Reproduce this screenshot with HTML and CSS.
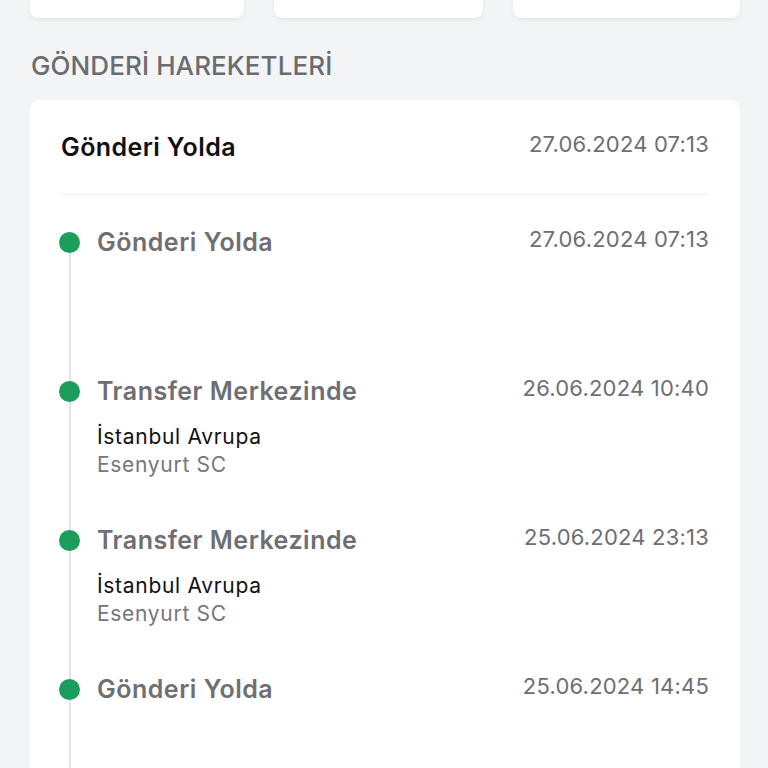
FILE: index.html
```html
<!DOCTYPE html>
<html lang="tr">
<head>
<meta charset="utf-8">
<link rel="stylesheet" href="styles.css">
</head>
<body>
<div class="page">
  <div class="top-cards">
    <div class="mini-card"></div>
    <div class="mini-card"></div>
    <div class="mini-card"></div>
  </div>
  <h2 class="section-title">GÖNDERİ HAREKETLERİ</h2>
  <div class="card">
    <div class="card-head">
      <div class="head-title">Gönderi Yolda</div>
      <div class="head-date">27.06.2024 07:13</div>
    </div>
    <div class="timeline">
      <div class="item">
        <span class="dot"></span>
        <div class="item-body">
          <div class="item-row">
            <div class="item-title">Gönderi Yolda</div>
            <div class="item-date">27.06.2024 07:13</div>
          </div>
        </div>
      </div>
      <div class="item">
        <span class="dot"></span>
        <div class="item-body">
          <div class="item-row">
            <div class="item-title">Transfer Merkezinde</div>
            <div class="item-date">26.06.2024 10:40</div>
          </div>
          <div class="item-sub">
            <div class="loc">İstanbul Avrupa</div>
            <div class="branch">Esenyurt SC</div>
          </div>
        </div>
      </div>
      <div class="item">
        <span class="dot"></span>
        <div class="item-body">
          <div class="item-row">
            <div class="item-title">Transfer Merkezinde</div>
            <div class="item-date">25.06.2024 23:13</div>
          </div>
          <div class="item-sub">
            <div class="loc">İstanbul Avrupa</div>
            <div class="branch">Esenyurt SC</div>
          </div>
        </div>
      </div>
      <div class="item">
        <span class="dot"></span>
        <div class="item-body">
          <div class="item-row">
            <div class="item-title">Gönderi Yolda</div>
            <div class="item-date">25.06.2024 14:45</div>
          </div>
        </div>
      </div>
    </div>
  </div>
</div>
</body>
</html>
```
FILE: styles.css
```css
* { box-sizing: border-box; }
html, body {
  margin: 0;
  padding: 0;
  background: #f3f4f6;
  font-family: Inter, "Noto Sans", sans-serif;
  overflow: hidden;
}
.page {
  width: 768px;
  height: 768px;
  padding: 0 28px 0 30px;
  overflow: hidden;
}
.top-cards {
  display: grid;
  grid-template-columns: 214px 209px 227px;
  column-gap: 30px;
  margin-top: -20px;
}
.mini-card {
  height: 38px;
  background: #fff;
  border-radius: 8px;
  box-shadow: 0 2px 4px rgba(0,0,0,0.06);
}
.section-title {
  margin: 33px 0 0 1px;
  height: 49px;
  font-size: 26px;
  line-height: 30px;
  font-weight: 500;
  color: #6b6c70;
  letter-spacing: 0.1px;
}
.card {
  width: 710px;
  background: #fff;
  border-radius: 10px;
  padding: 30px 31px 0 31px;
  height: 700px;
}
.card-head {
  display: flex;
  justify-content: space-between;
  align-items: flex-start;
  padding-bottom: 30px;
  border-bottom: 1px solid #f0f0f2;
}
.head-title {
  font-size: 25px;
  line-height: 34px;
  font-weight: 600;
  color: #111;
  letter-spacing: 0.4px;
}
.head-date {
  font-size: 22px;
  line-height: 28px;
  color: #6e6e73;
  letter-spacing: 0.2px;
}
.timeline {
  position: relative;
  margin-top: 30px;
}
.timeline::before {
  content: "";
  position: absolute;
  left: 8px;
  top: 17px;
  bottom: -200px;
  width: 2px;
  background: #e3e3e6;
}
.item {
  position: relative;
  display: flex;
  min-height: 149px;
  padding-left: 36px;
}
.dot {
  position: absolute;
  left: -2px;
  top: 7px;
  width: 21px;
  height: 21px;
  border-radius: 50%;
  background: #1b9d5b;
}
.item-body { flex: 1; }
.item-row {
  display: flex;
  justify-content: space-between;
  align-items: flex-start;
}
.item-title {
  font-size: 25px;
  line-height: 34px;
  font-weight: 600;
  color: #6e6e73;
  letter-spacing: 0.5px;
}
.item-date {
  font-size: 22px;
  line-height: 28px;
  color: #6e6e73;
  letter-spacing: 0.2px;
}
.item-sub {
  margin-top: 15px;
  font-size: 21px;
  line-height: 28px;
  letter-spacing: 0.7px;
}
.loc { color: #111; }
.branch { color: #76767b; }
```
